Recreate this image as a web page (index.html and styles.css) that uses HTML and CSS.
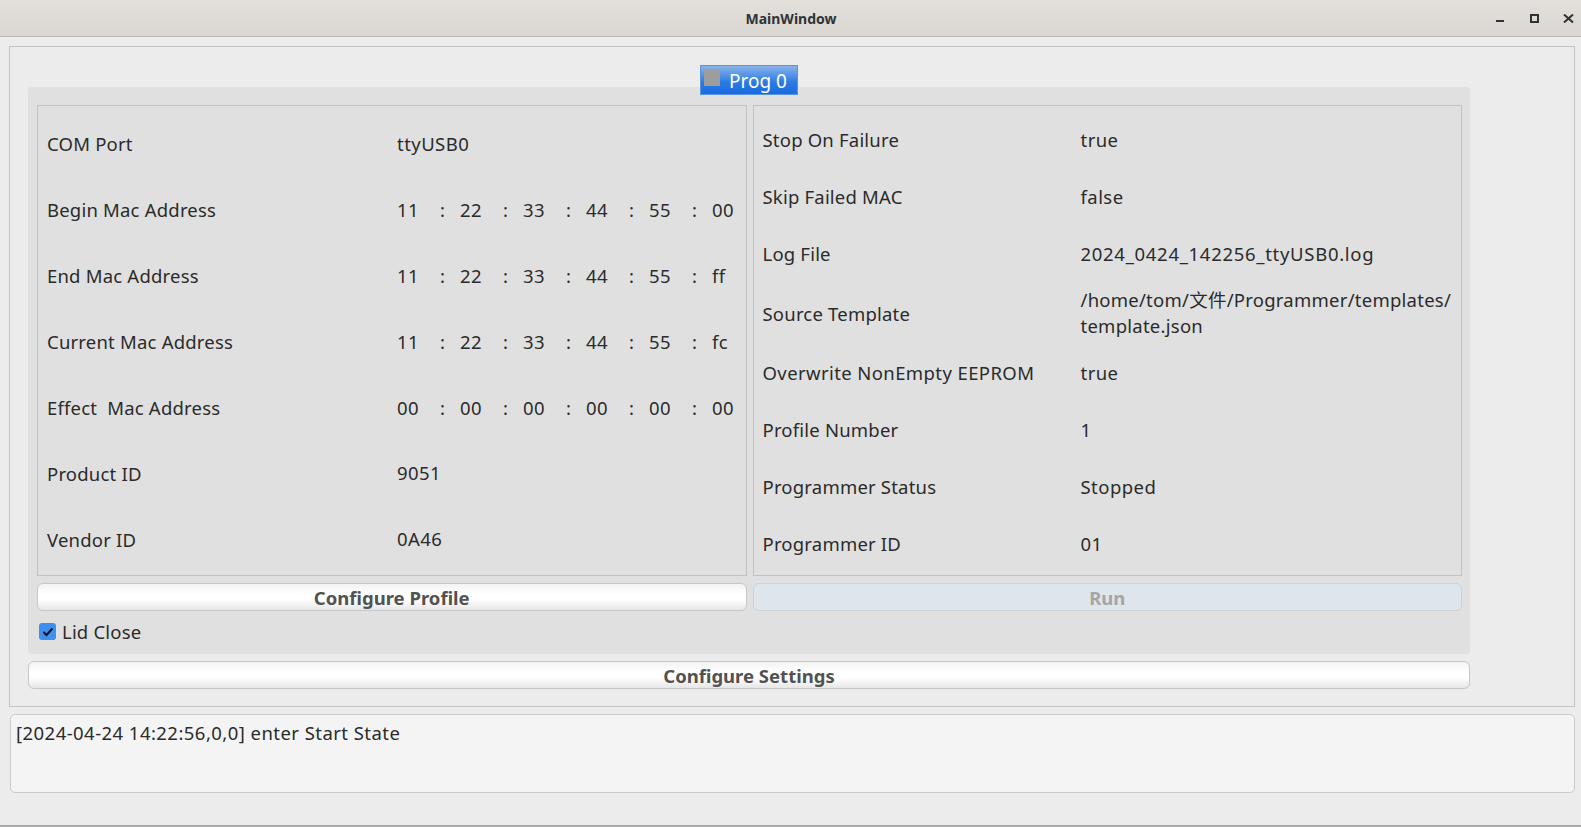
FILE: index.html
```html
<!DOCTYPE html>
<html>
<head>
<meta charset="utf-8">
<link rel="stylesheet" href="styles.css">
</head>
<body>
<div class="window">
  <div class="titlebar">
    <div class="title">MainWindow</div>
    <div class="controls">
      <span class="ctl ctl-min"></span>
      <span class="ctl ctl-max"></span>
      <svg class="ctl-close" width="11" height="9" viewBox="0 0 11 9"><path d="M1 0.5 L10 8.5 M10 0.5 L1 8.5" stroke="#2e3436" stroke-width="2"/></svg>
    </div>
  </div>
  <div class="content">
    <div class="group">
      <div class="tabs">
        <div class="tabbar">
          <div class="tab"><span class="tab-check"></span><span class="tab-label">Prog 0</span></div>
        </div>
        <div class="pane">
          <div class="frames">
            <div class="frame frame-left">
              <div class="row"><span class="lbl">COM Port</span><span class="val">ttyUSB0</span></div>
              <div class="row"><span class="lbl">Begin Mac Address</span>
                <div class="mac"><span>11</span><span>:</span><span>22</span><span>:</span><span>33</span><span>:</span><span>44</span><span>:</span><span>55</span><span>:</span><span>00</span></div></div>
              <div class="row"><span class="lbl">End Mac Address</span>
                <div class="mac"><span>11</span><span>:</span><span>22</span><span>:</span><span>33</span><span>:</span><span>44</span><span>:</span><span>55</span><span>:</span><span>ff</span></div></div>
              <div class="row"><span class="lbl">Current Mac Address</span>
                <div class="mac"><span>11</span><span>:</span><span>22</span><span>:</span><span>33</span><span>:</span><span>44</span><span>:</span><span>55</span><span>:</span><span>fc</span></div></div>
              <div class="row"><span class="lbl">Effect&nbsp; Mac Address</span>
                <div class="mac"><span>00</span><span>:</span><span>00</span><span>:</span><span>00</span><span>:</span><span>00</span><span>:</span><span>00</span><span>:</span><span>00</span></div></div>
              <div class="row"><span class="lbl">Product ID</span><span class="val">9051</span></div>
              <div class="row"><span class="lbl">Vendor ID</span><span class="val">0A46</span></div>
            </div>
            <div class="frame frame-right">
              <div class="row"><span class="lbl">Stop On Failure</span><span class="val">true</span></div>
              <div class="row"><span class="lbl">Skip Failed MAC</span><span class="val">false</span></div>
              <div class="row"><span class="lbl">Log File</span><span class="val val-digits">2024_0424_142256_ttyUSB0.log</span></div>
              <div class="row row-tall"><span class="lbl">Source Template</span><span class="val val-path">/home/tom/文件/Programmer/templates/<br>template.json</span></div>
              <div class="row"><span class="lbl lbl-wide">Overwrite NonEmpty EEPROM</span><span class="val">true</span></div>
              <div class="row"><span class="lbl">Profile Number</span><span class="val">1</span></div>
              <div class="row"><span class="lbl">Programmer Status</span><span class="val">Stopped</span></div>
              <div class="row"><span class="lbl">Programmer ID</span><span class="val">01</span></div>
            </div>
          </div>
          <div class="buttons">
            <div class="btn">Configure Profile</div>
            <div class="btn btn-disabled">Run</div>
          </div>
          <label class="check"><span class="box"><svg width="12" height="10" viewBox="0 0 12 10"><path d="M1.5 5 L4.5 8 L10.5 1.5" fill="none" stroke="#111" stroke-width="2"/></svg></span><span>Lid Close</span></label>
        </div>
      </div>
      <div class="btn btn-settings">Configure Settings</div>
    </div>
    <div class="log">[2024-04-24 14:22:56,0,0] enter Start State</div>
  </div>
</div>
</body>
</html>
```

FILE: styles.css
```css
html, body {
  margin: 0;
  padding: 0;
}
body {
  width: 1581px;
  height: 827px;
  overflow: hidden;
  background: #ececec;
  font-family: "Noto Sans", "Noto Sans CJK SC", sans-serif;
  color: #2b2b2b;
}
.window {
  height: 825px;
  border-bottom: 2px solid #a9a9a9;
  display: flex;
  flex-direction: column;
}
.titlebar {
  height: 36px;
  border-bottom: 1px solid #bdb4a9;
  background: linear-gradient(#e3e0dc, #dad6d1);
  position: relative;
  display: flex;
  align-items: center;
  justify-content: center;
}
.title {
  font-size: 14px;
  font-weight: bold;
  color: #2e3436;
  margin-left: 1px;
}
.controls {
  position: absolute;
  right: 7px;
  top: 13px;
  display: flex;
  align-items: flex-start;
}
.ctl-min {
  display: block;
  width: 8px;
  height: 2px;
  background: #2e3436;
  margin-top: 7px;
  margin-right: 26px;
}
.ctl-max {
  display: block;
  width: 5px;
  height: 5px;
  border: 2px solid #2e3436;
  margin-top: 1px;
  margin-right: 24px;
}
.ctl-close {
  display: block;
  margin-top: 1px;
}
.content {
  flex: 1;
  padding: 9px 6px 0 9px;
  display: flex;
  flex-direction: column;
}
.group {
  height: 661px;
  box-sizing: border-box;
  border: 1px solid #c3c3c3;
  padding: 18px 104px 0 18px;
}
.tabs {
  display: flex;
  flex-direction: column;
}
.tabbar {
  display: flex;
  justify-content: center;
  height: 30px;
  margin-bottom: -8px;
  position: relative;
  z-index: 1;
}
.tab {
  width: 98px;
  height: 30px;
  box-sizing: border-box;
  background: linear-gradient(#88b3ea, #2a79e2 60%, #1a6be0);
  border: 1px solid #5b93de;
  display: flex;
  align-items: center;
  color: #fff;
  font-size: 19px;
}
.tab-check {
  width: 16px;
  height: 16px;
  background: #9d9d9d;
  margin-left: 3px;
  margin-right: 9px;
  margin-top: -5px;
}
.tab-label {
  margin-top: 1px;
}
.pane {
  height: 567px;
  box-sizing: border-box;
  background: #e0e0e0;
  border-radius: 3px;
  padding: 18px 8px 0 9px;
}
.frames {
  display: flex;
  gap: 6px;
  height: 471px;
}
.frame {
  flex: 1;
  box-sizing: border-box;
  border: 1px solid #c2c2c2;
  display: flex;
  flex-direction: column;
  font-size: 18.5px;
}
.frame-left {
  padding: 5px 0 3px;
}
.frame-right {
  padding: 5px 0 3px;
}
.row {
  flex: 1;
  display: flex;
  align-items: center;
  padding-left: 9px;
}
.lbl {
  letter-spacing: 0.2px;
}
.lbl-wide {
  letter-spacing: 0.4px;
}
.frame-left .lbl {
  width: 350px;
}
.frame-right .lbl {
  width: 318px;
}
.frame-right .row {
  flex: 57;
}
.frame-right .row-tall {
  flex: 62;
}
.val {
  line-height: 26px;
  letter-spacing: 0.45px;
}
.val-digits {
  letter-spacing: 0.7px;
}
.val-path {
  letter-spacing: 0.25px;
}
.mac {
  display: grid;
  grid-template-columns: repeat(5, 43px 20px) 30px;
  letter-spacing: 0.4px;
}
.buttons {
  display: flex;
  gap: 6px;
  margin-top: 7px;
}
.btn {
  flex: 1;
  height: 28px;
  box-sizing: border-box;
  border: 1px solid #c3c8cd;
  border-radius: 6px;
  background: linear-gradient(#f3f3f3, #ffffff 40%, #ffffff 60%, #e6e6e6);
  display: flex;
  align-items: center;
  justify-content: center;
  font-size: 18.5px;
  font-weight: bold;
  color: #525252;
}
.btn-disabled {
  background: #dfe6eb;
  color: #a5a5a5;
  border-color: #cbd3d9;
}
.check {
  display: flex;
  align-items: center;
  margin-top: 8px;
  margin-left: 2px;
  font-size: 18.5px;
  letter-spacing: 0.2px;
  gap: 6px;
}
.box {
  width: 17px;
  height: 17px;
  border-radius: 3px;
  background: #3d90ef;
  display: flex;
  align-items: center;
  justify-content: center;
}
.btn-settings {
  width: 1442px;
  flex: none;
  margin-top: 7px;
}
.log {
  margin-top: 7px;
  margin-left: 1px;
  height: 79px;
  box-sizing: border-box;
  border: 1px solid #c6ccd2;
  border-radius: 5px;
  background: #f4f4f4;
  padding: 5px 5px;
  font-size: 18.5px;
  letter-spacing: 0.45px;
  color: #2b2b2b;
}
```
